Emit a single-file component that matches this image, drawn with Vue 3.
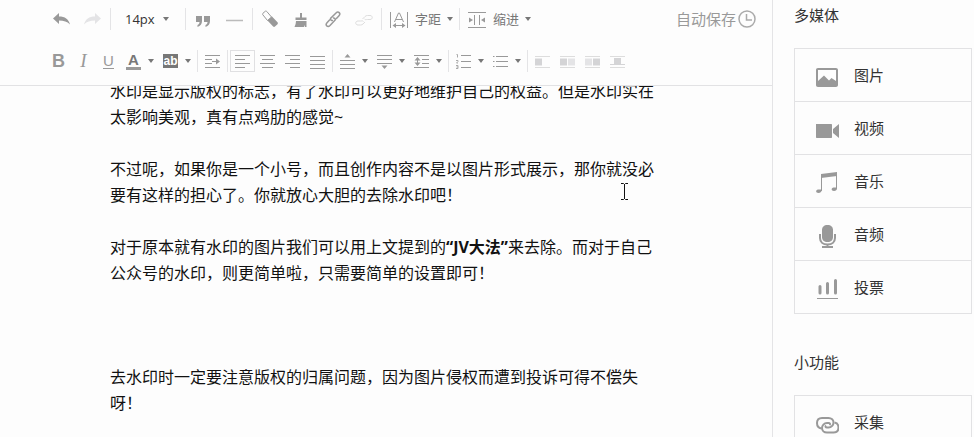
<template>
  <div class="page">
    <main class="main">
      <div class="toolbar">
        <div class="row">
          <button v-for="name in ['undo', 'redo']" :key="name" class="tool" :aria-label="name">
            <svg width="19" height="18" viewBox="0 0 19 18">
              <path v-for="(p, i) in icons[name]" :key="i" :class="p[0]" :d="p[1]" />
            </svg>
          </button>
          <i class="sep"></i>
          <div class="size">
            <select v-model="fontSize" aria-label="font size">
              <option v-for="s in sizes" :key="s">{{ s }}</option>
            </select>
            <i class="caret"></i>
          </div>
          <i class="sep"></i>
          <button v-for="name in ['quote', 'line']" :key="name" class="tool" :aria-label="name">
            <svg width="19" height="18" viewBox="0 0 19 18">
              <path v-for="(p, i) in icons[name]" :key="i" :class="p[0]" :d="p[1]" />
            </svg>
          </button>
          <i class="sep"></i>
          <button v-for="name in ['eraser', 'brush', 'link', 'unlink']" :key="name" class="tool" :aria-label="name">
            <svg width="19" height="18" viewBox="0 0 19 18">
              <path v-for="(p, i) in icons[name]" :key="i" :class="p[0]" :d="p[1]" />
            </svg>
          </button>
          <template v-for="item in textTools" :key="item.icon">
            <i class="sep"></i>
            <button class="text-tool">
              <svg width="20" height="18" viewBox="0 0 20 18">
                <path v-for="(p, i) in icons[item.icon]" :key="i" :class="p[0]" :d="p[1]" />
              </svg>
              <span>{{ item.label }}</span>
              <i class="caret"></i>
            </button>
          </template>
          <div class="autosave">
            <span>自动保存</span>
            <svg width="18" height="18" viewBox="0 0 18 18">
              <circle class="clock" cx="9" cy="9" r="8" />
              <path class="clock" d="M8.5 4v6H14" />
            </svg>
          </div>
        </div>

        <div class="row">
          <button class="small bold">B</button>
          <button class="small italic">I</button>
          <button class="small under"><span>U</span></button>
          <button class="small drop fore"><span>A</span><i class="caret"></i></button>
          <button class="small drop back"><span>ab</span><i class="caret"></i></button>
          <template v-for="(group, g) in groups" :key="g">
            <i class="sep"></i>
            <button
              v-for="item in group"
              :key="item.icon"
              class="small"
              :class="{ drop: item.drop, active: item.icon === align }"
              :aria-label="item.icon"
              @click="pick(item)"
            >
              <svg width="15" height="16" viewBox="0 0 15 16">
                <path v-for="(p, i) in icons[item.icon]" :key="i" :class="p[0]" :d="p[1]" />
              </svg>
              <i v-if="item.drop" class="caret"></i>
            </button>
          </template>
        </div>
      </div>

      <article class="editor">
        <p>水印是显示版权的标志，有了水印可以更好地维护自己的权益。但是水印实在太影响美观，真有点鸡肋的感觉~</p>
        <p>不过呢，如果你是一个小号，而且创作内容不是以图片形式展示，那你就没必要有这样的担心了。你就放心大胆的去除水印吧！</p>
        <p>对于原本就有水印的图片我们可以用上文提到的<strong>“JV大法”</strong>来去除。而对于自己公众号的水印，则更简单啦，只需要简单的设置即可！</p>
        <p class="after-gap">去水印时一定要注意版权的归属问题，因为图片侵权而遭到投诉可得不偿失呀！</p>
      </article>
      <svg class="pointer" width="9" height="17" viewBox="0 0 9 17">
        <path d="M1 .5h2.5l1 1 1-1H8M4.5 1v15M1 16.5h2.500l1-1 1 1H8" />
      </svg>
    </main>

    <aside class="side">
      <section v-for="section in sections" :key="section.title">
        <h3>{{ section.title }}</h3>
        <ul>
          <li v-for="item in section.items" :key="item.icon">
            <button>
              <svg width="24" height="24" viewBox="0 0 24 24">
                <path v-for="(p, i) in icons[item.icon]" :key="i" :class="p[0]" :d="p[1]" />
              </svg>
              <span>{{ item.label }}</span>
            </button>
          </li>
        </ul>
      </section>
    </aside>
  </div>
</template>

<script setup>
import { ref } from 'vue';

const fontSize = ref('14px');
const sizes = ['12px', '14px', '16px', '18px', '20px', '24px'];
const align = ref('left');

const textTools = [
  { icon: 'spacing', label: '字距' },
  { icon: 'inset', label: '缩进' }
];

const groups = [
  [{ icon: 'indent' }],
  [{ icon: 'left' }, { icon: 'center' }, { icon: 'right' }, { icon: 'justify' }],
  [{ icon: 'before', drop: true }, { icon: 'after', drop: true }, { icon: 'leading', drop: true }],
  [{ icon: 'ordered', drop: true }, { icon: 'bullets', drop: true }],
  [{ icon: 'float-none' }, { icon: 'float-left' }, { icon: 'float-right' }, { icon: 'float-center' }]
];

const pick = (item) => {
  if (['left', 'center', 'right', 'justify'].includes(item.icon)) {
    align.value = item.icon;
  }
};

const sections = [
  {
    title: '多媒体',
    items: [
      { icon: 'image', label: '图片' },
      { icon: 'video', label: '视频' },
      { icon: 'music', label: '音乐' },
      { icon: 'mic', label: '音频' },
      { icon: 'vote', label: '投票' }
    ]
  },
  {
    title: '小功能',
    items: [{ icon: 'collect', label: '采集' }]
  }
];

// each entry is [paint class, path data]
const icons = {
  undo: [['f', 'M1 8.5 7 3v3.5c6 0 9.5 2.5 11 8-3-3-6-4-11-4V14z']],
  redo: [['f pale', 'M18 8.5 12 3v3.5c-6 0-9.5 2.5-11 8 3-3 6-4 11-4V14z']],
  quote: [['f', 'M2 6h6v5c0 3-1.5 5-4.5 6v-2c1.5-.7 2-1.5 2-3H2zM10 6h6v5c0 3-1.5 5-4.5 6v-2c1.5-.7 2-1.500 2-3H10z']],
  line: [['rule', 'M1 10.5h17']],
  eraser: [
    ['s', 'M2 5c-.7-.7-.5-1.3 0-1.800L4 1.500c.6-.6 1.200-.6 1.800 0L10.500 7 6.500 10.500z'],
    ['f', 'M11 6.500 16.500 12.300c.6.700.5 1.300 0 1.900L14 16.500c-.6.6-1.300.5-1.900 0L6.500 10.500z']
  ],
  brush: [
    ['s2', 'M9 3v6'],
    ['f', 'M3.500 7.500h11v2.500h-11zM4 11h10.500v6H13v-2l-1 2H2.500C3.500 15 4 13 4 11z']
  ],
  link: [
    ['link', 'm10 10.500c-1.500.3-2.800-.7-2.500-2L13 3c1-1 2.300-1.200 3.200-.4.9.9.7 2.200-.2 3.200L13 9'],
    ['link', 'M10 8c1.500-.3 2.500.700 2.200 2L7 15.500c-1 1-2.300 1.200-3.200.4-.9-.9-.7-2.200.2-3.200L7 9.500']
  ],
  unlink: [
    ['s pale', 'M8.500 9 11 6.500c.7-.7 1.500-1 2.500-1H16c3 0 3 4 0 4h-2.500c-1.500 0-2 .5-3-.5'],
    ['s pale', 'M11 12 9 14c-.7.700-1.500 1-2.500 1H4c-3 0-3-4 0-4h2.500c1.500 0 2-.5 3 .5']
  ],
  spacing: [
    ['s', 'M1.500 2v16M18.500 2v16M5.500 12l4-9h1l4 9M7 9.500h6M6 15.500h8'],
    ['f', 'M3.500 15.500 7 13v5zM16.500 15.500 13 13v5z']
  ],
  inset: [
    ['s', 'M1 2.500h18M1 17.500h18M7.500 5v10M12.500 5v10'],
    ['f', 'M2 7.500v5L6 10zM18 7.500v5L14 10z']
  ],
  indent: [['s', 'M0 2.500h15M0 14.500h15M0 6.500h7M0 10.500h7M7 8.500h7'], ['f', 'M11 5.500 15 8.500 11 11.500z']],
  left: [['s', 'M0 2.500h15M0 6.500h10M0 10.500h15M0 14.500h10']],
  center: [['s', 'M0 2.500h15M2 6.500h11M0 10.500h15M2 14.500h11']],
  right: [['s', 'M0 2.500h15M5 6.500h10M0 10.500h15M5 14.500h10']],
  justify: [['s', 'M0 3.500h15M0 7.500h15M0 11.500h15M0 15.500h15']],
  before: [['s', 'M0 7.500h15M0 11.500h15M0 15.500h15'], ['f', 'm7.500 1 3 3.500h-6z']],
  after: [['s', 'M0 2.500h15M0 6.500h15M0 10.500h15'], ['f', 'm7.500 16 3-3.500h-6z']],
  leading: [['s', 'M0 2.500h15M0 14.500h15M8 6.500h7M8 10.500h7M3.500 6v5'], ['f', 'm3.500 4 3 3.500h-6zM3.500 13l3-3.500h-6z']],
  ordered: [
    ['s', 'M5 2.500h10M5 8.500h10M5 14.500h10'],
    ['thin', 'M.5 1.500h1v3M0 7.500h2v1L.5 10H2M0 12.500h2v3H0M.5 14H2']
  ],
  bullets: [['s', 'M3 3.500h12M3 8.500h12M3 13.500h12M0 3.500h1.500M0 8.500h1.500M0 13.500h1.500']],
  'float-none': [['s pale', 'M0 3.500h15M0 14.500h15'], ['f soft', 'M0 5.500h7v7H0z']],
  'float-left': [['s pale', 'M0 3.500h15M0 14.500h15'], ['f soft', 'M0 5.500h7v7H0z'], ['f pale', 'M8 5.500h7v7H8z']],
  'float-right': [['s pale', 'M0 3.500h15M0 14.500h15'], ['f pale', 'M0 5.500h7v7H0z'], ['f soft', 'M8 5.500h7v7H8z']],
  'float-center': [['s pale', 'M0 3.500h15M0 14.500h15'], ['s soft', 'M0 11.500h15'], ['f soft', 'M4 5h7v6H4z']],
  image: [['f even', 'M3 3h18c1 0 2 .7 2 2v15c0 1.300-1 2-2 2H3c-1.300 0-2-.7-2-2V5c0-1.300.7-2 2-2zM3 5v11l6-5.500 5 5 2.500-2.500L21 16V5z']],
  video: [['f', 'M1 6h15c.7 0 1 .3 1 1v12c0 .7-.3 1-1 1H2c-.7 0-1-.3-1-1zM24 6v14l-6-5v-4z']],
  music: [
    ['s', 'M6.500 20V3.500M21.500 18V2'],
    ['f', 'M6 3 22 1v4L6 7zM6.500 18.500c.5 2-1 3.500-3 3.500-3 0-3-3-.5-3.500zM22 16.500c.5 2-1 3.500-3 3.500-3 0-3-3-.5-3.500z']
  ],
  mic: [
    ['f', 'M12.500 1C16 1 18 3 18 6v7c0 3-2 5-5.500 5S7 16 7 13V6c0-3 2-5 5.500-5z'],
    ['s2', 'M5 10v4c0 4 3 6.500 7.500 6.500S20 18 20 14v-4M12.500 20v3M7 23h11']
  ],
  vote: [['bar', 'M5 9.500V16M12.500 6.500V16M20.500 3.500V16'], ['s', 'M2 21.500h21']],
  collect: [
    ['s2', 'M6.500 16.500C3.500 16 2 14 2 11c0-3 2-5 5-5h6.500c3 0 5 2 5 4.500s-2 5-5 5H12c-1.500 0-2-1-1-2'],
    ['s2', 'M19.500 10.500c2.500.5 4 2.500 4 5 0 3-2 5-5 5H12c-3 0-5-2-5-4.500s2-5 5-5h1.500c1.500 0 2 1 1 2']
  ]
};
</script>

<style>
body {
  background: #fdfdfd;
}
</style>

<style scoped>
.page {
  display: flex;
  height: 100vh;
  overflow: hidden;
  color: #333;
  font-family: "Open Sans", "Noto Sans CJK SC", sans-serif;
}

.main {
  position: relative;
  display: flex;
  flex: 1;
  flex-direction: column;
  min-width: 0;
}

button {
  padding: 0;
  border: 0;
  background: none;
  color: #999;
  font-family: inherit;
  cursor: pointer;
}

svg {
  display: block;
  flex: none;
}

path,
circle {
  fill: none;
  stroke: none;
}

.f {
  fill: #999;
}

.even {
  fill-rule: evenodd;
}

.s {
  stroke: #999;
  stroke-width: 1;
}

.s2 {
  stroke: #999;
  stroke-width: 2;
}

.link {
  stroke: #999;
  stroke-width: 1.5;
}

.rule {
  stroke: #bbb;
  stroke-width: 1.5;
}

.clock {
  stroke: #aaa;
  stroke-width: 1.5;
}

.thin {
  stroke: #aaa;
  stroke-width: 1;
}

.bar {
  stroke: #999;
  stroke-width: 3;
  stroke-linecap: round;
}

.f.pale {
  fill: #e4e4e6;
}

.s.pale {
  stroke: #ddd;
}

.f.soft {
  fill: #d4d4d6;
}

.s.soft {
  stroke: #d4d4d6;
}

/* toolbar */
.toolbar {
  display: flex;
  flex-direction: column;
  gap: 20px;
  padding: 8px 16px 13px 46px;
  border-bottom: 1px solid #e2e2e4;
}

.row {
  display: flex;
  align-items: center;
  height: 22px;
}

.sep {
  flex: none;
  width: 1px;
  height: 22px;
  margin: 0 2px;
  background: #e4e4e6;
}

.caret {
  flex: none;
  border: 3px solid transparent;
  border-top: 4px solid #777;
  border-bottom: 0;
}

.tool {
  display: flex;
  flex: none;
  justify-content: center;
  width: 31px;
}

.size {
  display: flex;
  align-items: center;
  width: 70px;
}

.size select {
  width: 50px;
  padding: 0 0 0 12px;
  border: 0;
  background: none;
  color: #333;
  font-family: inherit;
  font-size: 13px;
  appearance: none;
}

.text-tool {
  display: flex;
  flex: none;
  align-items: center;
  gap: 6px;
  width: 73px;
  padding-left: 5px;
  color: #777;
  font-size: 13px;
  line-height: 22px;
  white-space: nowrap;
}

.autosave {
  display: flex;
  align-items: center;
  gap: 2px;
  margin-left: auto;
  color: #999;
  font-size: 15px;
  line-height: 22px;
}

.small {
  display: flex;
  flex: none;
  align-items: center;
  justify-content: center;
  width: 25px;
  height: 22px;
}

.drop {
  justify-content: flex-start;
  gap: 7px;
  width: 37px;
  padding-left: 5px;
}

.active {
  border: 1px solid #e0e0e2;
}

.bold {
  font-family: "Liberation Sans", sans-serif;
  font-size: 18px;
  font-weight: bold;
}

.italic {
  font-family: "Liberation Serif", serif;
  font-size: 19px;
  font-style: italic;
}

.under span {
  border-bottom: 1px solid #999;
  font-family: "Liberation Sans", sans-serif;
  font-size: 15px;
  line-height: 14px;
}

.fore span {
  width: 15px;
  border-bottom: 3px solid #999;
  color: #777;
  font-family: "Liberation Sans", sans-serif;
  font-size: 15px;
  font-weight: bold;
  line-height: 14px;
}

.back span {
  width: 15px;
  background: #777;
  color: #fff;
  font-family: "Liberation Sans", sans-serif;
  font-size: 12px;
  font-weight: bold;
  line-height: 14px;
}

/* text area, scrolled a little under the toolbar */
.editor {
  flex: 1;
  overflow: hidden;
  padding: 0 106px 0 110px;
  color: #111;
  font-size: 16px;
  line-height: 26px;
}

.editor p {
  margin: 0 0 26px;
}

.editor p:first-child {
  margin-top: -8px;
}

.editor .after-gap {
  margin-top: 78px;
}

.pointer {
  position: absolute;
  top: 183px;
  left: 620px;
}

.pointer path {
  stroke: #111;
}

/* right column */
.side {
  flex: none;
  box-sizing: border-box;
  width: 202px;
  padding: 0 2px 0 21px;
  border-left: 1px solid #e4e4e6;
}

.side section {
  margin-bottom: 33px;
}

.side h3 {
  margin: 0;
  padding-bottom: 18px;
  font-size: 15px;
  font-weight: normal;
  line-height: 30px;
}

.side ul {
  margin: 0;
  padding: 0;
  border: 1px solid #e2e2e4;
  list-style: none;
}

.side li + li {
  border-top: 1px solid #e2e2e4;
}

.side li button {
  display: flex;
  align-items: center;
  gap: 15px;
  width: 100%;
  height: 52px;
  padding: 0 0 2px 20px;
  color: #333;
  font-size: 15px;
}

.side li svg {
  margin-top: 6px;
}
</style>
